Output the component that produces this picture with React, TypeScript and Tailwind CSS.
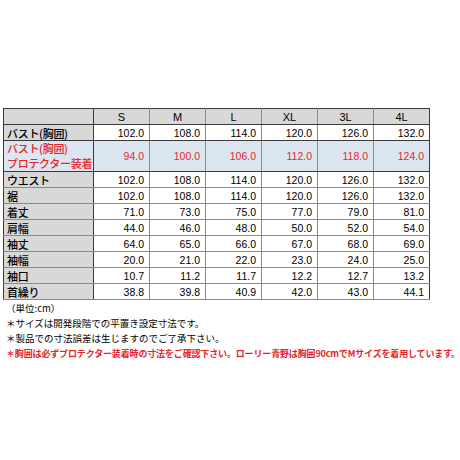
import React from "react";

const sizes = ["S", "M", "L", "XL", "3L", "4L"];

const rows: { label: string; values: string[] }[] = [
  { label: "バスト(胸囲)", values: ["102.0", "108.0", "114.0", "120.0", "126.0", "132.0"] },
  { label: "__blue__", values: ["94.0", "100.0", "106.0", "112.0", "118.0", "124.0"] },
  { label: "ウエスト", values: ["102.0", "108.0", "114.0", "120.0", "126.0", "132.0"] },
  { label: "裾", values: ["102.0", "108.0", "114.0", "120.0", "126.0", "132.0"] },
  { label: "着丈", values: ["71.0", "73.0", "75.0", "77.0", "79.0", "81.0"] },
  { label: "肩幅", values: ["44.0", "46.0", "48.0", "50.0", "52.0", "54.0"] },
  { label: "袖丈", values: ["64.0", "65.0", "66.0", "67.0", "68.0", "69.0"] },
  { label: "袖幅", values: ["20.0", "21.0", "22.0", "23.0", "24.0", "25.0"] },
  { label: "袖口", values: ["10.7", "11.2", "11.7", "12.2", "12.7", "13.2"] },
  { label: "首繰り", values: ["38.8", "39.8", "40.9", "42.0", "43.0", "44.1"] },
];

const jp = "font-['Noto_Sans_CJK_JP',sans-serif]";
const num = "font-['Liberation_Sans','Noto_Sans_CJK_JP',sans-serif]";

export default function App() {
  return (
    <div className="w-[460px] h-[460px] bg-white pt-[108px] pl-[3px]">
      <table className="table-fixed border-collapse border border-[#3a3a3a] w-[426px]">
        <colgroup>
          <col className="w-[90px]" />
          {sizes.map((s) => (
            <col key={s} className="w-[56px]" />
          ))}
        </colgroup>
        <thead>
          <tr className="h-[16px] bg-[#d8d8d8]">
            <th className="border-r border-b border-[#3a3a3a] p-0"></th>
            {sizes.map((s) => (
              <th
                key={s}
                className={`border-l border-b border-[#3a3a3a] border-l-[#8a8a8a] p-0 text-center text-[11px] font-normal leading-[14px] text-black ${num}`}
              >
                {s}
              </th>
            ))}
          </tr>
        </thead>
        <tbody>
          {rows.map((r, i) => {
            const blue = r.label === "__blue__";
            const nextBlue = rows[i + 1]?.label === "__blue__";
            const darkBottom = blue || nextBlue;
            return (
              <tr key={i} className={blue ? "h-[30px] bg-[#dce6f1]" : "h-[16px]"}>
                <td
                  className={`p-0 pl-[3px] border-r border-[#3a3a3a] border-b ${
                    darkBottom ? "border-b-[#3a3a3a]" : "border-b-[#8a8a8a]"
                  } ${blue ? "bg-[#dce6f1]" : "bg-[#d8d8d8]"} ${jp} font-medium tracking-[-0.3px] whitespace-nowrap`}
                >
                  {blue ? (
                    <div className="text-[11px] leading-[15px] text-[#e8242b]">
                      <div>バスト(胸囲)</div>
                      <div>プロテクター装着</div>
                    </div>
                  ) : (
                    <div className="text-[11px] leading-[14px] text-black">{r.label}</div>
                  )}
                </td>
                {r.values.map((v, j) => (
                  <td
                    key={j}
                    className={`p-0 pr-[5px] text-right border-l border-l-[#8a8a8a] border-b ${
                      darkBottom ? "border-b-[#3a3a3a]" : "border-b-[#8a8a8a]"
                    } text-[10.5px] leading-[14px] ${num} ${blue ? "text-[#e8242b]" : "text-black"}`}
                  >
                    {v}
                  </td>
                ))}
              </tr>
            );
          })}
        </tbody>
      </table>
      <div className={`pl-[3px] pt-[1px] ${jp} text-[9.5px] leading-[15px] text-black`}>
        <div>（単位:cm）</div>
        <div>＊サイズは開発段階での平置き設定寸法です。</div>
        <div>＊製品での寸法誤差は生じますのでご了承下さい。</div>
        <div className="text-[9px] font-bold tracking-[-0.15px] text-[#e8242b] whitespace-nowrap">
          ＊胸囲は必ずプロテクター装着時の寸法をご確認下さい。ローリー青野は胸囲90cmでMサイズを着用しています。
        </div>
      </div>
    </div>
  );
}
